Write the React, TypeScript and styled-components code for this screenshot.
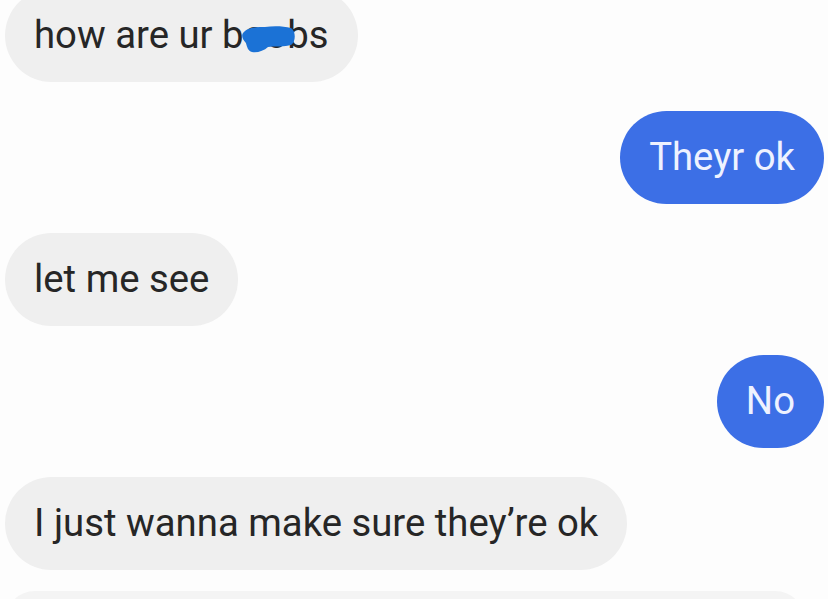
import React from "react";
import styled, { createGlobalStyle } from "styled-components";

const Global = createGlobalStyle`
  html, body { margin: 0; padding: 0; background: #fdfdfd; }
  body { overflow: hidden; font-family: Roboto, "Liberation Sans", Arial, sans-serif; }
`;

const Thread = styled.div`
  width: 828px;
  height: 599px;
  box-sizing: border-box;
  padding: 0 4px 0 5px;
  overflow: hidden;
`;

const List = styled.div`
  display: flex;
  flex-direction: column;
  gap: 29px;
  margin-top: -11px;
`;

const Row = styled.div<{ $mine?: boolean }>`
  display: flex;
  justify-content: ${(p) => (p.$mine ? "flex-end" : "flex-start")};
`;

const Bubble = styled.div<{ $mine?: boolean }>`
  position: relative;
  box-sizing: border-box;
  height: 93px;
  display: flex;
  align-items: center;
  padding: 0 29px;
  border-radius: 47px;
  font-size: 38.3px;
  line-height: 1;
  white-space: nowrap;
  background: ${(p) => (p.$mine ? "#3c6fe6" : "#efefef")};
  color: ${(p) => (p.$mine ? "#eef2ff" : "#262626")};
`;

const NextBubble = styled.div`
  height: 60px;
  width: 800px;
  border-radius: 30px;
  background: #f4f4f4;
  margin-top: -8px;
`;

const Scribble = styled.svg`
  position: absolute;
  left: 236px;
  top: 37px;
  width: 54px;
  height: 26px;
  overflow: visible;
`;

export default function App() {
  return (
    <>
      <Global />
      <Thread>
        <List>
          <Row>
            <Bubble>
              how are ur boobs
              <Scribble viewBox="0 0 54 26" width="54" height="26">
                <path
                  d="M2 7 C7 1 16 1 24 1 C32 0 42 0 50 2 C55 5 55 16 50 19 C44 21 34 20 27 21 C23 25 16 27 11 26 C7 25 6 21 5 17 C2 14 0 10 2 7 Z"
                  fill="#1b72d6"
                />
              </Scribble>
            </Bubble>
          </Row>
          <Row $mine>
            <Bubble $mine>Theyr ok</Bubble>
          </Row>
          <Row>
            <Bubble>let me see</Bubble>
          </Row>
          <Row $mine>
            <Bubble $mine>No</Bubble>
          </Row>
          <Row>
            <Bubble>I just wanna make sure they’re ok</Bubble>
          </Row>
          <Row>
            <NextBubble />
          </Row>
        </List>
      </Thread>
    </>
  );
}
